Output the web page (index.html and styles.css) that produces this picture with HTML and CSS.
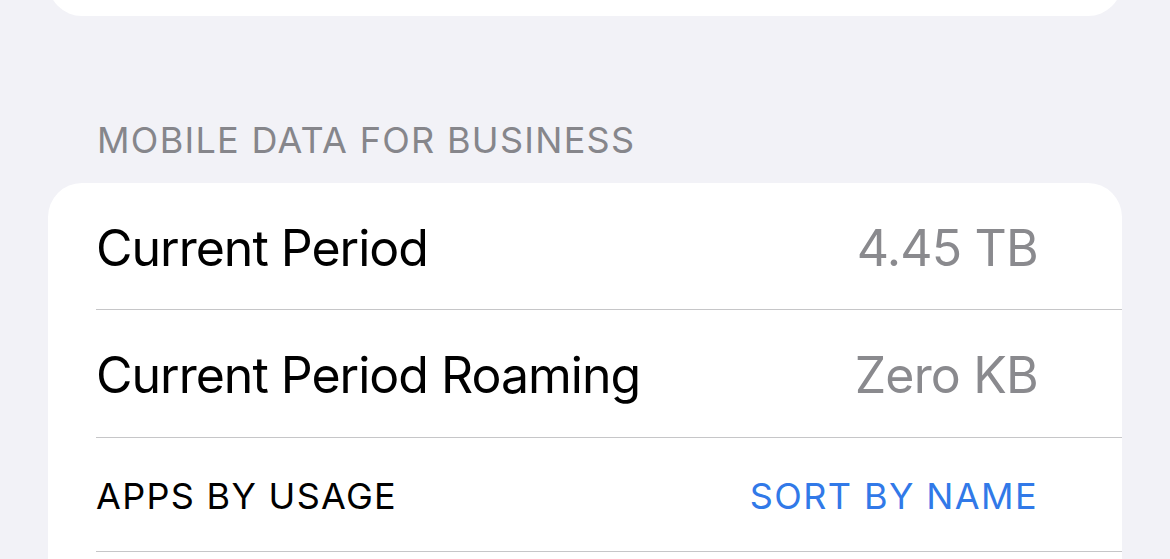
FILE: index.html
```html
<!DOCTYPE html>
<html lang="en">
<head>
    <meta charset="UTF-8">
    <meta name="viewport" content="width=device-width, initial-scale=1.0">
    <title>Mobile Data</title>
    <link rel="stylesheet" href="styles.css">
</head>
<body>
    <div class="page">
        <div class="card card-prev"></div>

        <div class="section-title">MOBILE DATA FOR BUSINESS</div>
        <div class="card">
            <div class="row">
                <span class="label">Current Period</span>
                <span class="value">4.45 TB</span>
            </div>
            <div class="row">
                <span class="label">Current Period Roaming</span>
                <span class="value">Zero KB</span>
            </div>
            <div class="row row-small">
                <span class="label">APPS BY USAGE</span>
                <a class="action" href="#">SORT BY NAME</a>
            </div>
            <div class="row row-empty"></div>
        </div>
    </div>
</body>
</html>
```

FILE: styles.css
```css
body {
    margin: 0;
    background-color: #f2f2f7;
    font-family: Inter, "Noto Sans", sans-serif;
    overflow: hidden;
}
.page {
    padding: 0 48px;
    width: 1074px;
}
.card {
    background: #fff;
    border-radius: 34px;
    overflow: hidden;
}
.card-prev {
    height: 120px;
    margin-top: -104px;
}
.section-title {
    color: #86868b;
    font-size: 36px;
    letter-spacing: 1.3px;
    padding: 102px 0 0 49px;
    height: 65px;
}
.row {
    margin-left: 48px;
    padding-right: 85px;
    height: 127px;
    display: flex;
    align-items: center;
    justify-content: space-between;
    border-bottom: 1px solid #c6c6c8;
    box-sizing: border-box;
}
.row + .row {
    height: 128px;
}
.label {
    font-size: 50px;
    color: #000;
    letter-spacing: -1px;
    padding-top: 3px;
}
.value {
    font-size: 50px;
    color: #8a8a8e;
    letter-spacing: -0.8px;
    margin-right: -1px;
    padding-top: 3px;
}
.row-small {
    height: 114px !important;
}
.row-small .label {
    font-size: 36px;
    letter-spacing: 1.3px;
}
.action {
    font-size: 36px;
    color: #3179e8;
    letter-spacing: 1.4px;
    margin-right: -1px;
    padding-top: 3px;
    text-decoration: none;
}
.row-empty {
    height: 80px !important;
    border-bottom: none;
}
```
